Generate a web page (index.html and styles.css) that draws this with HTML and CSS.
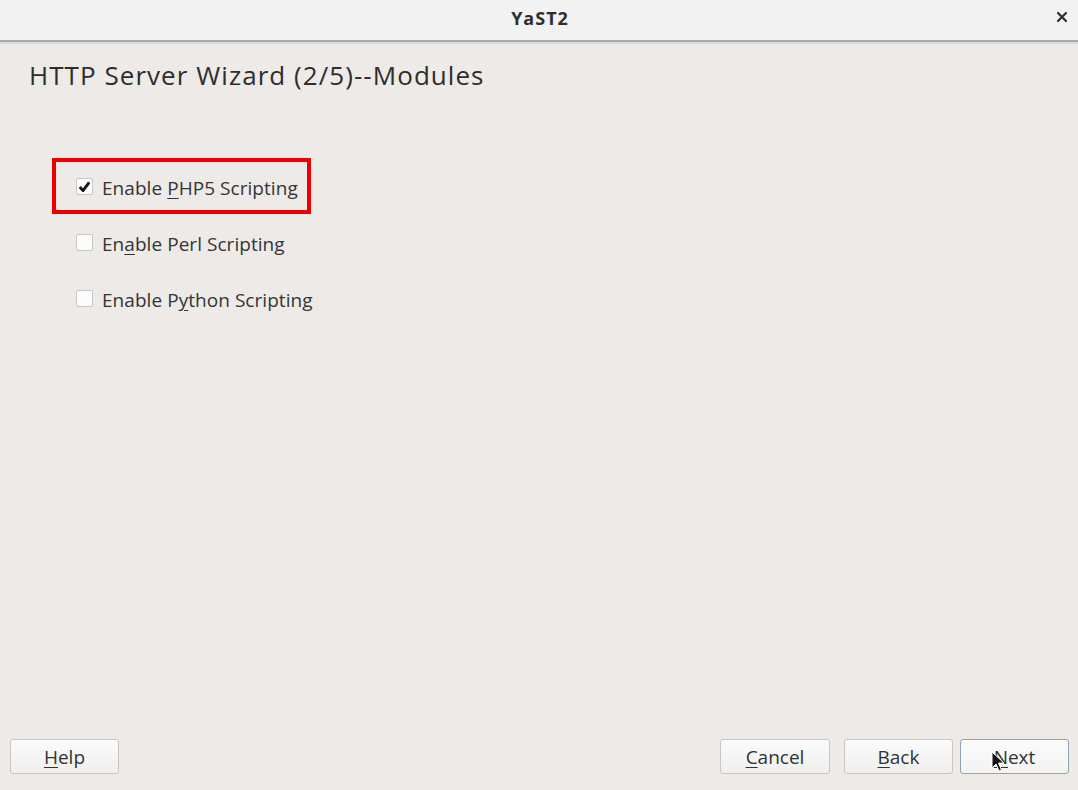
FILE: index.html
```html
<!DOCTYPE html>
<html lang="en">
<head>
<meta charset="utf-8">
<title>YaST2</title>
<link rel="stylesheet" href="styles.css">
</head>
<body>
<div class="window">
  <header class="titlebar">
    <span class="title">YaST2</span>
    <span class="close">
      <svg width="12" height="12" viewBox="0 0 12 12"><path d="M2 2 L10 10 M10 2 L2 10" stroke="#2e2e2e" stroke-width="2.2" stroke-linecap="round"/></svg>
    </span>
  </header>
  <main class="content">
    <h1 class="heading">HTTP Server Wizard (2/5)--Modules</h1>
    <div class="options">
      <label class="option highlighted">
        <span class="box checked">
          <svg width="13" height="13" viewBox="0 0 13 13"><path d="M1.8 7 L5 10.6 L11.2 2.4" fill="none" stroke="#111" stroke-width="2.8" stroke-linejoin="round"/></svg>
        </span>
        <span class="label">Enable <u>P</u>HP5 Scripting</span>
      </label>
      <label class="option">
        <span class="box"></span>
        <span class="label">En<u>a</u>ble Perl Scripting</span>
      </label>
      <label class="option">
        <span class="box"></span>
        <span class="label">Enable P<u>y</u>thon Scripting</span>
      </label>
    </div>
  </main>
  <footer class="buttons">
    <button class="btn"><u>H</u>elp</button>
    <div class="spacer"></div>
    <button class="btn wide"><u>C</u>ancel</button>
    <button class="btn"><u>B</u>ack</button>
    <button class="btn default"><u>N</u>ext
      <svg class="cursor" width="14" height="22" viewBox="0 0 14 22"><path d="M1 1 L1 17 L5 13 L8 20 L10.5 19 L7.5 12 L13 12 Z" fill="#111" stroke="#fff" stroke-width="1"/></svg>
    </button>
  </footer>
</div>
</body>
</html>
```
FILE: styles.css
```css
* { box-sizing: border-box; }
html, body {
  margin: 0;
  padding: 0;
  width: 1078px;
  height: 790px;
  overflow: hidden;
}
body {
  font-family: "Open Sans", "Noto Sans", "DejaVu Sans", sans-serif;
  color: #2e3436;
  background: #edeae7;
}
.window {
  display: flex;
  flex-direction: column;
  height: 790px;
}
.titlebar {
  position: relative;
  height: 42px;
  flex: 0 0 42px;
  background: #f2f2f2;
  border-bottom: 2px solid #a9a9a9;
  box-shadow: 0 2px 0 #dcdad7;
  display: flex;
  align-items: center;
  justify-content: center;
}
.title {
  font-weight: 700;
  font-size: 18px;
  letter-spacing: 1px;
  color: #2e2e2e;
  margin-top: -5px;
  margin-left: 2px;
}
.close {
  position: absolute;
  right: 10px;
  top: 11px;
  width: 12px;
  height: 12px;
  display: flex;
}
.content {
  flex: 1;
  padding: 18px 0 0 29px;
}
.heading {
  margin: 0;
  font-weight: 400;
  font-size: 26px;
  letter-spacing: 1.05px;
  line-height: 30px;
  color: #2e2e2e;
}
.options {
  margin-top: 68px;
  margin-left: 23px;
  display: flex;
  flex-direction: column;
}
.option {
  display: flex;
  align-items: center;
  height: 56px;
  width: 259px;
  padding-left: 20px;
  padding-top: 3px;
  border: 4px solid transparent;
  font-size: 19px;
  letter-spacing: 0.05px;
  color: #353535;
  white-space: nowrap;
}
.option.highlighted {
  border-color: #ee0000;
}
.box {
  flex: 0 0 17px;
  width: 17px;
  height: 17px;
  border: 1px solid #c9c7c4;
  border-radius: 2px;
  background: #fcfcfc;
  display: flex;
  align-items: center;
  justify-content: center;
  margin-right: 9px;
  margin-top: -2px;
}
.label u {
  text-decoration-thickness: 1px;
  text-underline-offset: 3px;
}
.buttons {
  display: flex;
  align-items: center;
  padding: 0 9px 16px 10px;
  gap: 14px;
}
.spacer { flex: 1; }
.btn {
  position: relative;
  width: 109px;
  height: 35px;
  font-family: inherit;
  font-size: 19px;
  color: #2e3436;
  background: linear-gradient(#fbfbfb, #f0efee);
  border: 1px solid #c8c6c3;
  border-radius: 3px;
  box-shadow: inset 0 1px 0 #fff;
  padding: 0;
}
.btn.wide { width: 110px; }
.btn u {
  text-decoration-thickness: 1px;
  text-underline-offset: 3px;
}
.btn.default {
  margin-left: -7px;
  border-color: #8ea3b6;
  background: linear-gradient(#fbfbfb, #f3f3f2);
}
.cursor {
  position: absolute;
  left: 30px;
  top: 11px;
}
```
